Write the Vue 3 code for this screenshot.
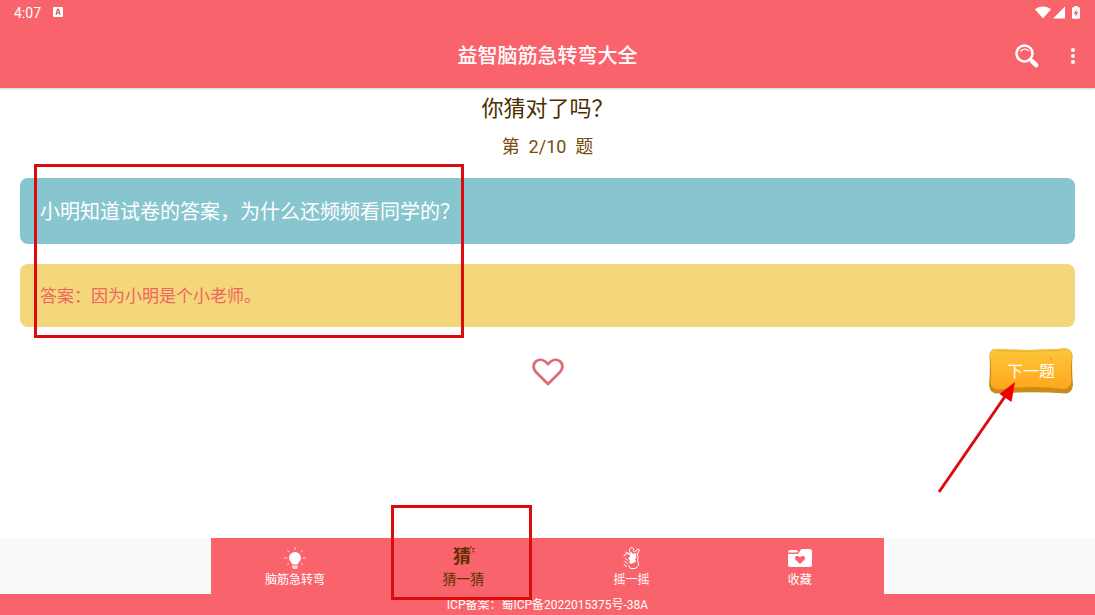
<script setup>
const tabs = [
  { id: 'bulb', label: '脑筋急转弯' },
  { id: 'guess', label: '猜一猜' },
  { id: 'shake', label: '摇一摇' },
  { id: 'folder', label: '收藏' },
]
const active = 'guess'
const progress = '第  2/10  题'
</script>

<template>
  <div class="page">
    <header class="top">
      <div class="status">
        <span class="clock">4:07</span>
        <svg width="10" height="10" viewBox="0 0 10 10">
          <rect width="10" height="10" rx="1" fill="#fff" />
          <path d="M3 7.800 4.600 2.300h.9L7 7.800M3.600 6h2.800" fill="none" stroke="#d9535d" stroke-width="1.200" />
        </svg>
        <div class="signals">
          <svg width="16" height="13" viewBox="0 0 16 13"><path d="M0 3.200C4.600-.4 11.400-.4 16 3.200L8 12.500Z" fill="#fff" /></svg>
          <svg width="12" height="13" viewBox="0 0 12 13"><path d="M12 .5V12.500H0Z" fill="#fff" /></svg>
          <svg class="battery" width="8" height="13" viewBox="0 0 8 13">
            <path d="M2.500 0h3v1.300H7.200L8 2v10l-.8.8H.8L0 12V2l.8-.7h1.700Z" fill="#fff" />
            <path d="M4.900 3 1.700 7.600h1.900L3.200 11l3.100-4.800H4.400Z" fill="#ef5661" />
          </svg>
        </div>
      </div>
      <div class="bar">
        <h1>益智脑筋急转弯大全</h1>
        <div class="actions">
          <button type="button" class="plain" aria-label="搜索">
            <svg width="24" height="24" viewBox="0 0 24 24" fill="none" stroke="#fff" stroke-linecap="round">
              <circle cx="9.500" cy="9.500" r="8" stroke-width="2.600" />
              <path d="M5.800 7.200c1.700-2.600 5.500-2.900 7.500-.4" stroke-width="1.300" />
              <path d="m15.300 15.300 1.800 1.800" stroke-width="2.500" />
              <path d="m17.300 17.300 3.800 3.800" stroke-width="4.500" />
            </svg>
          </button>
          <button type="button" class="plain" aria-label="更多">
            <svg width="4" height="16" viewBox="0 0 4 16" fill="#fff">
              <circle cx="2" cy="2" r="2" /><circle cx="2" cy="8" r="2" /><circle cx="2" cy="14" r="2" />
            </svg>
          </button>
        </div>
      </div>
    </header>

    <main>
      <h2>你猜对了吗？</h2>
      <p class="progress">{{ progress }}</p>
      <div class="card question">小明知道试卷的答案，为什么还频频看同学的？</div>
      <div class="card answer">答案：因为小明是个小老师。</div>
      <div class="controls">
        <button type="button" class="plain heart" aria-label="收藏此题">
          <svg width="32" height="28" viewBox="0 0 32 28">
            <path d="M16 26 4.200 14.300C.5 10.400 1 5.600 4.200 3.200 8 .5 12.700 2 16 6.200 19.300 2 24 .5 27.800 3.200 31 5.600 31.500 10.400 27.800 14.300Z" fill="none" stroke="#dc6c76" stroke-width="2.800" stroke-linejoin="round" />
          </svg>
        </button>
        <button type="button" class="plain next">
          <svg class="plate" viewBox="0 0 84 46" preserveAspectRatio="none" aria-hidden="true">
            <defs>
              <linearGradient id="gold" x1="0" y1="0" x2="0" y2="1">
                <stop offset="0" stop-color="#fcc53c" /><stop offset=".5" stop-color="#ffb72b" /><stop offset="1" stop-color="#ffa51b" />
              </linearGradient>
            </defs>
            <path d="M6 1Q42 3 77 .5Q83 1 83.500 8Q82.500 22 84 37Q83 45 77 45.500Q42 43 7 45.500Q1 45 0 37Q1.500 21 .5 8Q1 1 6 1Z" fill="#c98c18" />
            <path d="M6 1Q42 3 77 .5Q83 1 83 8Q81 22 82.500 32Q82 40 75 41Q42 37 9 41.500Q2 41 1.500 34Q3 21 1 8Q1 1 6 1Z" fill="url(#gold)" />
            <path d="M6 2.500Q42 4.500 77 2" fill="none" stroke="#edb434" stroke-width="1.200" />
            <path d="m61 9 2 3" stroke="#d99a22" />
          </svg>
          <span>下一题</span>
        </button>
      </div>
    </main>

    <div class="tabstrip">
      <nav>
        <a v-for="tab in tabs" :key="tab.id" href="#" :class="{ active: tab.id === active }">
          <svg v-if="tab.id === 'bulb'" width="24" height="24" viewBox="0 0 24 24">
            <path d="M12 6a6 6 0 0 1 6 6c0 3-2.800 4-3.200 6.500H9.200C8.800 16 6 15 6 12a6 6 0 0 1 6-6Z" fill="#fff" />
            <path d="M9.200 19.500h5.600v2l-1 1.500h-3.600l-1-1.500Z" fill="#ffd3d6" />
            <path d="M12 1v3M4.200 4.200l2 2M19.800 4.200l-2 2M1 12h3.500M19.500 12H23M4.200 19l1.800-1.700M19.800 19 18 17.300" stroke="#ffd3d6" stroke-width="1" />
          </svg>
          <span v-else-if="tab.id === 'guess'" class="glyph" aria-hidden="true">猜<svg class="spark" width="8" height="8" viewBox="0 0 8 8"><path d="M1 2.500 0 1M3.500 2 4 0M5.200 3.500 7.500 2M5.500 5.500 7.500 6" stroke="#613000" stroke-width="1.200" /></svg></span>
          <svg v-else-if="tab.id === 'shake'" width="24" height="24" viewBox="0 0 24 24" fill="none" stroke="#fff" stroke-linecap="round" stroke-linejoin="round">
            <path d="M10 6.500C9 4 9.500 2 11.300 1.500c2-.3 2.700 1.500 2.500 4M15 6l3-3 1.500 1-2 4M17.500 8c1.500 4-.8 5.500.5 8s.3 5-3 6.500h-4c-1.500-.5-2-1.500-2-3" />
            <path d="M9 7.500 5 8.200l-1 2M5.500 12.500l2 2M4.500 15l3 3M4 18.500l2.500 2M6 6.200l2.500 1" />
            <path d="m9.500 8 2-1.500 1.500 2 2.700-1v4l-1 2 .8 2-2.500 1-1.500 1-2-1 .8-2-1.800-2 2-2Z" fill="#fff" />
          </svg>
          <svg v-else width="26" height="24" viewBox="0 0 26 24">
            <path d="M1 6.500Q1 4 3.500 4H9.500L11 5.500 9.500 6.500H2Z" fill="#fff" />
            <path d="M1 8h10L13.500 4Q14 3 15.500 3H22.500Q25 3 25 5.500V18.500Q25 21 22.500 21H3.500Q1 21 1 18.500Z" fill="#fff" />
            <path d="m13 18-4.500-4.300c-2-2.500 1.500-5.700 4.500-2.400 3-3.300 6.500-.1 4.500 2.400Z" fill="#f9646c" />
          </svg>
          <span class="label">{{ tab.label }}</span>
        </a>
      </nav>
    </div>
    <footer>ICP备案：蜀ICP备2022015375号-38A</footer>

    <div class="mark mark-card"></div>
    <div class="mark mark-tab"></div>
    <svg class="arrow" width="80" height="112" viewBox="0 0 80 112" aria-hidden="true">
      <path d="M2 110 69 13" stroke="#da0c10" stroke-width="3" />
      <path d="M78 0 62.500 12 74.500 20Z" fill="#f20000" />
    </svg>
  </div>
</template>

<style>
body { background: #fff; }
</style>

<style scoped>
.page {
  position: relative;
  display: flex;
  flex-direction: column;
  min-height: 100vh;
  font-family: Roboto, "Noto Sans CJK SC", sans-serif;
}
.page * { box-sizing: border-box; }
h1, h2, p { margin: 0; }
.plain { border: 0; padding: 0; background: none; font: inherit; cursor: pointer; }
svg { display: block; }
.top { background: #f9646c; color: #fff; box-shadow: 0 1px 2px #0003; }
.status { display: flex; align-items: center; gap: 12px; height: 24px; padding: 0 15px 0 14px; }
.clock { font-size: 14px; line-height: 16px; padding-top: 2px; }
.signals { display: flex; gap: 2px; margin-left: auto; }
.battery { margin-left: 5px; }
.bar { display: grid; grid-template-columns: 1fr auto 1fr; align-items: center; height: 64px; padding: 0 20px; }
h1 { grid-column: 2; font-size: 20px; line-height: 24px; font-weight: 500; }
.actions { display: flex; align-items: center; justify-content: flex-end; gap: 32px; }
main { flex: 1; padding: 0 20px; text-align: center; }
h2 { padding-top: 4px; font-size: 22px; line-height: 34px; font-weight: 400; color: #4e2d00; }
.progress { padding-top: 7px; font-size: 18px; line-height: 28px; white-space: pre; color: #774b0c; }
.card { display: flex; align-items: center; border-radius: 8px; padding: 19px 20px 17px; text-align: left; }
.question { margin-top: 17px; font-size: 20px; line-height: 30px; background: #87c6cf; color: #fff; }
.answer { margin-top: 20px; font-size: 17px; line-height: 27px; background: #f4d67b; color: #f0655f; }
.controls { display: grid; grid-template-columns: 1fr auto 1fr; align-items: center; margin-top: 21px; }
.heart { grid-column: 2; padding-top: 2px; }
.next { position: relative; justify-self: end; width: 84px; height: 46px; margin-right: 2px; padding-bottom: 2px; font-size: 16px; color: #fff; }
.plate { position: absolute; inset: 0; width: 100%; height: 100%; }
.next span { position: relative; }
.tabstrip { display: flex; justify-content: center; background: #fafafa; }
nav { display: flex; flex: 0 1 673px; background: #f9646c; }
nav a { flex: 1; display: flex; flex-direction: column; align-items: center; height: 56px; padding-top: 8px; color: #fff; text-decoration: none; font-size: 12px; }
.label { line-height: 20px; }
nav a.active { color: #613000; font-size: 14px; }
nav a.active .label { line-height: 18px; }
.glyph { position: relative; padding-right: 3px; font-size: 18px; line-height: 22px; height: 24px; font-weight: 700; }
.spark { position: absolute; top: 0; right: -1px; }
footer { height: 21px; background: #f9646c; color: #fff; font-size: 12px; line-height: 23px; text-align: center; }
.mark { position: absolute; border: 3px solid #da0c10; pointer-events: none; }
.mark-card { left: 34px; top: 164px; width: 430px; height: 174px; }
.mark-tab { left: 391px; top: 505px; width: 141px; height: 95px; }
.arrow { position: absolute; left: 937px; top: 382px; pointer-events: none; }
</style>
